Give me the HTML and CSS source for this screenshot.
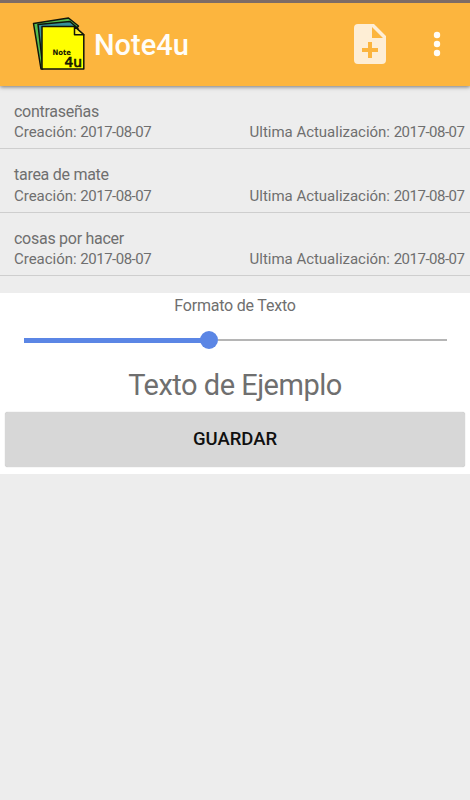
FILE: index.html
```html
<!DOCTYPE html>
<html lang="es">
<head>
<meta charset="utf-8">
<title>Note4u</title>
<link rel="stylesheet" href="styles.css">
</head>
<body>
<header class="appbar">
  <svg class="logo" viewBox="0 0 56 56" width="56" height="56">
    <g stroke="#10150a" stroke-width="1.5" stroke-linejoin="round">
      <path d="M2.500 7.500 37.500 2l10 8-36 43H10z" fill="#57bd4e"/>
      <path d="M7 8.500 39 5.500l8 7-35 40z" fill="#37909a"/>
      <path d="M11 10.500H43.500L52.800 18.800V53H11z" fill="#ffff00"/>
      <path d="M43.500 10.500V18.800H52.800z" fill="#fff12b"/>
    </g>
    <text class="logo-small" x="21.500" y="38.500" textLength="18.500" lengthAdjust="spacingAndGlyphs">Note</text>
    <text class="logo-big" x="33.500" y="51" textLength="17.500" lengthAdjust="spacingAndGlyphs">4u</text>
  </svg>
  <h1 class="brand">Note4u</h1>
  <svg class="add" viewBox="0 0 32 40" width="32" height="40">
    <path fill="#feeed5" fill-rule="evenodd" d="M4 0H20L32 12V36a4 4 0 0 1-4 4H4a4 4 0 0 1-4-4V4a4 4 0 0 1 4-4zM18 3V14H29zM14 18V24H8V28H14V34H18V28H24V24H18V18z"/>
  </svg>
  <svg class="more" viewBox="0 0 8 26" width="8" height="26" fill="#fffdf8">
    <circle cx="4" cy="4" r="3.200"/><circle cx="4" cy="13" r="3.200"/><circle cx="4" cy="22" r="3.200"/>
  </svg>
</header>
<main>
  <ul class="notes">
    <li class="note"><div class="name">contraseñas</div><div class="dates"><span class="created">Creación: <time>2017-08-07</time></span><span class="updated">Ultima Actualización: <time>2017-08-07</time></span></div></li>
    <li class="note"><div class="name">tarea de mate</div><div class="dates"><span class="created">Creación: <time>2017-08-07</time></span><span class="updated">Ultima Actualización: <time>2017-08-07</time></span></div></li>
    <li class="note"><div class="name">cosas por hacer</div><div class="dates"><span class="created">Creación: <time>2017-08-07</time></span><span class="updated">Ultima Actualización: <time>2017-08-07</time></span></div></li>
  </ul>
  <section class="format">
    <h2 class="label">Formato de Texto</h2>
    <div class="slider"><span class="filled"></span><span class="thumb"></span><span class="rest"></span></div>
    <p class="sample">Texto de Ejemplo</p>
    <button class="save">GUARDAR</button>
  </section>
</main>
</body>
</html>
```
FILE: styles.css
```css
* { box-sizing: border-box; }
body {
  margin: 0;
  min-height: 800px;
  background: #ededed;
  color: #6f6f6f;
  font-family: Roboto, sans-serif;
}
.appbar {
  display: flex;
  align-items: center;
  height: 86px;
  padding: 0 29px 1px 31px;
  border-top: 3px solid #7d6c66;
  background: #fcb53e;
  box-shadow: 0 1px 4px rgba(0, 0, 0, .5);
}
.logo { margin: -1px 0 0 -.5px; }
.logo-small { font: bold 7.5px "DejaVu Sans", sans-serif; fill: #171700; }
.logo-big { font: 14px "DejaVu Sans", sans-serif; fill: #171700; stroke: #171700; stroke-width: .7; }
.brand {
  flex: 1;
  margin: 1px 0 0 7.5px;
  color: #fffdf8;
  font-size: 29px;
  font-weight: 500;
  line-height: 34px;
}
.add { margin-right: 47px; }
.notes { margin: 0; padding: 0; list-style: none; height: 207px; }
.note {
  height: 63.5px;
  padding: 16px 5.5px 0 14px;
  border-bottom: 1px solid #cecece;
}
.note:first-child { height: 63px; }
.name { font-size: 16px; line-height: 19px; letter-spacing: -.27px; }
.dates {
  display: flex;
  justify-content: space-between;
  margin-top: 1px;
  font-size: 15px;
  line-height: 20px;
  letter-spacing: -.02px;
  white-space: nowrap;
}
.note:nth-child(2) .dates { margin-top: 2px; }
.dates time { letter-spacing: -.49px; }
.format {
  display: flex;
  flex-direction: column;
  height: 181px;
  padding: 3px 5px 7px;
  background: #fff;
}
.label {
  margin: 0;
  font-size: 16px;
  font-weight: 400;
  line-height: 20px;
  letter-spacing: -.2px;
  text-align: center;
}
.slider {
  display: flex;
  align-items: center;
  height: 18px;
  margin: 15px 18px 0 18.5px;
}
.filled { width: 177.5px; height: 5px; background: #5b86e5; }
.thumb { width: 18px; height: 18px; margin-left: -1px; border-radius: 50%; background: #5b86e5; }
.rest { flex: 1; height: 2px; background: #b5b5b5; }
.sample {
  margin: 18px 0 0;
  font-size: 29px;
  line-height: 36px;
  letter-spacing: -.5px;
  text-align: center;
}
.save {
  height: 55px;
  margin-top: auto;
  padding: 0;
  border: 0;
  border-radius: 3px;
  background: #d7d7d7;
  box-shadow: 0 0 1px #aaa;
  color: #101010;
  font: 500 18.5px/53px Roboto, sans-serif;
}
```
